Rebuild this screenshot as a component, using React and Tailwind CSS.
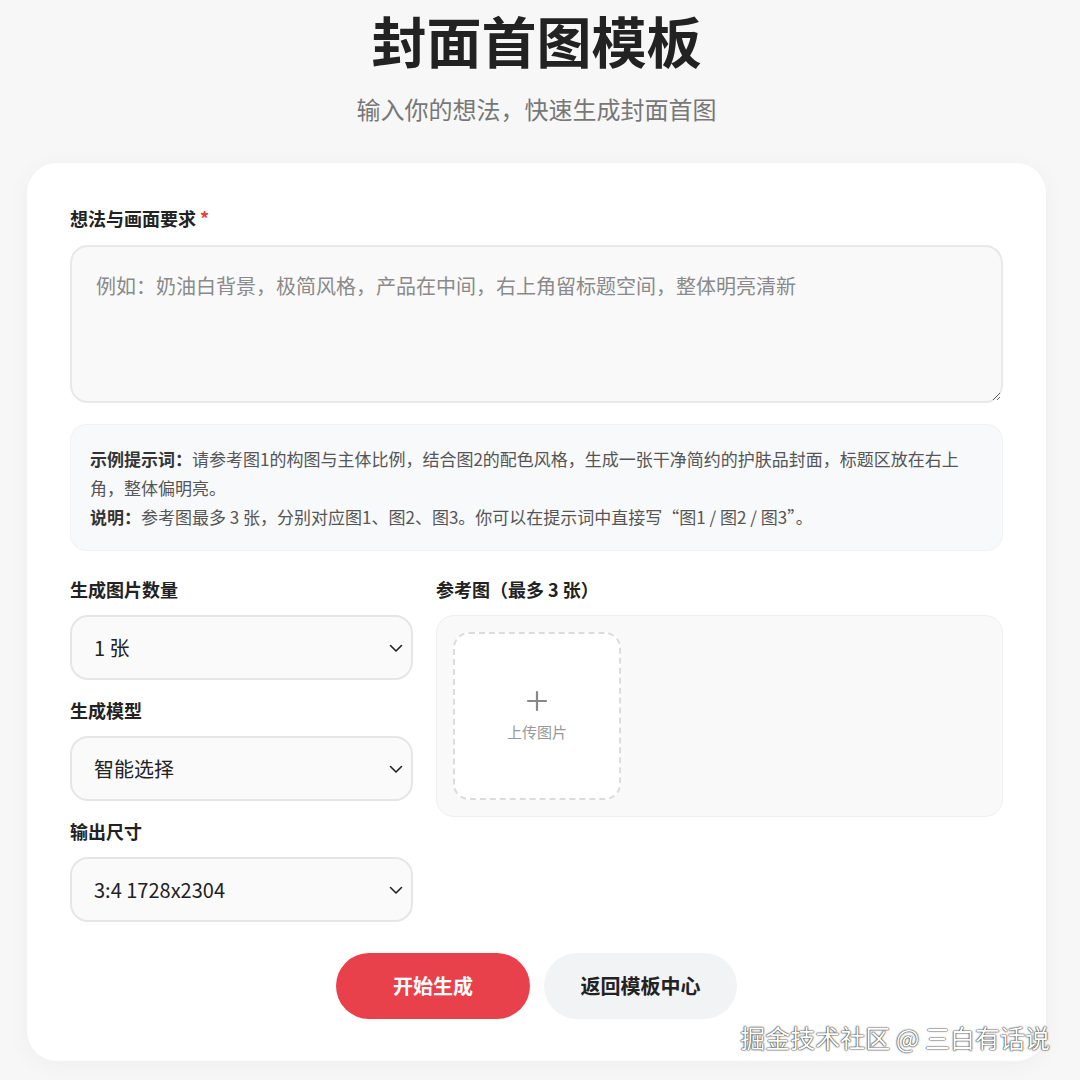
import React, { useState } from 'react';

const font = { fontFamily: '"Noto Sans CJK SC", "Noto Sans", sans-serif' };

const Chevron = () => (
  <svg
    className="pointer-events-none absolute right-[9px] top-1/2 -translate-y-1/2"
    width="16"
    height="16"
    viewBox="0 0 16 16"
    fill="none"
  >
    <path d="M2.5 5.5l5.5 5.5 5.5-5.5" stroke="#222" strokeWidth="1.6" strokeLinecap="round" strokeLinejoin="round" />
  </svg>
);

const SelectField = ({ label, value, options, onChange }) => (
  <div>
    <label className="block text-[18px] leading-[24px] font-bold text-[#222] mb-[14px]">{label}</label>
    <div className="relative">
      <select
        value={value}
        onChange={e => onChange(e.target.value)}
        className="w-full h-[65px] appearance-none rounded-[18px] border-2 border-[#e6e6e6] bg-[#fafafa] pl-[22px] pr-10 text-[20px] text-[#222] outline-none"
        style={font}
      >
        {options.map(o => (
          <option key={o} value={o}>{o}</option>
        ))}
      </select>
      <Chevron />
    </div>
  </div>
);

const App = () => {
  const [idea, setIdea] = useState('');
  const [count, setCount] = useState('1 张');
  const [model, setModel] = useState('智能选择');
  const [size, setSize] = useState('3:4 1728x2304');

  return (
    <div className="relative min-h-[1080px] bg-[#f7f7f7] pl-[27px] pr-[34px] pb-5" style={font}>
      {/* Header */}
      <div className="text-center pt-[5px]">
        <h1 className="text-[55px] leading-[68px] font-bold text-[#222]">封面首图模板</h1>
        <p className="mt-[20px] text-[24px] leading-[32px] text-[#777]">输入你的想法，快速生成封面首图</p>
      </div>

      {/* Card */}
      <div className="mt-[38px] rounded-[30px] bg-white px-[43px] pt-[43px] pb-[42px] shadow-[0_4px_24px_rgba(0,0,0,0.04)]">
        <label className="block text-[18px] leading-[24px] font-bold text-[#222] mb-[15px]">
          想法与画面要求 <span className="text-[#e53e3e]">*</span>
        </label>
        <textarea
          value={idea}
          onChange={e => setIdea(e.target.value)}
          placeholder="例如：奶油白背景，极简风格，产品在中间，右上角留标题空间，整体明亮清新"
          className="block w-full h-[158px] rounded-[18px] border-2 border-[#e8e8e8] bg-[#f9f9f9] px-[24px] py-[24px] text-[20px] leading-[30px] text-[#222] placeholder:text-[#8a8a8a] outline-none"
          style={font}
        />

        {/* Hint box */}
        <div className="mt-[21px] rounded-[16px] border border-[#f0f2f4] bg-[#f8f9fa] px-[19px] py-[19px] text-[17px] leading-[29px] text-[#555]">
          <p>
            <span className="font-bold text-[#333]">示例提示词：</span>
            请参考图1的构图与主体比例，结合图2的配色风格，生成一张干净简约的护肤品封面，标题区放在右上角，整体偏明亮。
          </p>
          <p>
            <span className="font-bold text-[#333]">说明：</span>
            参考图最多 3 张，分别对应图1、图2、图3。你可以在提示词中直接写“图1 / 图2 / 图3”。
          </p>
        </div>

        {/* Options */}
        <div className="mt-[26px] grid grid-cols-[343px_1fr] gap-x-[23px]">
          <div className="flex flex-col gap-[18px]">
            <SelectField label="生成图片数量" value={count} onChange={setCount} options={['1 张', '2 张', '3 张', '4 张']} />
            <SelectField label="生成模型" value={model} onChange={setModel} options={['智能选择']} />
            <SelectField label="输出尺寸" value={size} onChange={setSize} options={['3:4 1728x2304', '1:1 2048x2048', '16:9 2560x1440']} />
          </div>

          <div>
            <label className="block text-[18px] leading-[24px] font-bold text-[#222] mb-[14px]">参考图（最多 3 张）</label>
            <div className="rounded-[18px] border border-[#efefef] bg-[#f9f9f9] p-[16px]">
              <button
                type="button"
                className="flex h-[168px] w-[168px] flex-col items-center justify-center rounded-[16px] border-2 border-dashed border-[#dcdcdc] bg-white"
              >
                <svg width="22" height="22" viewBox="0 0 22 22" fill="none">
                  <path d="M11 2v18M2 11h18" stroke="#888" strokeWidth="2.2" strokeLinecap="round" />
                </svg>
                <span className="mt-[10px] text-[15px] leading-[20px] text-[#999]">上传图片</span>
              </button>
            </div>
          </div>
        </div>

        {/* Actions */}
        <div className="mt-[31px] flex justify-center gap-[14px]">
          <button
            type="button"
            className="h-[66px] w-[194px] rounded-full bg-[#e8414c] text-[20px] font-bold text-white"
          >
            开始生成
          </button>
          <button
            type="button"
            className="h-[66px] w-[193px] rounded-full bg-[#f1f3f5] text-[20px] font-bold text-[#222]"
          >
            返回模板中心
          </button>
        </div>
      </div>

      {/* Watermark */}
      <div className="absolute right-[30px] top-[1020px] text-[25px] leading-[34px] text-white [text-shadow:0_0_2px_rgba(0,0,0,0.9),0_0_1px_rgba(0,0,0,0.9)]">
        掘金技术社区 @ 三白有话说
      </div>
    </div>
  );
};

export default App;
